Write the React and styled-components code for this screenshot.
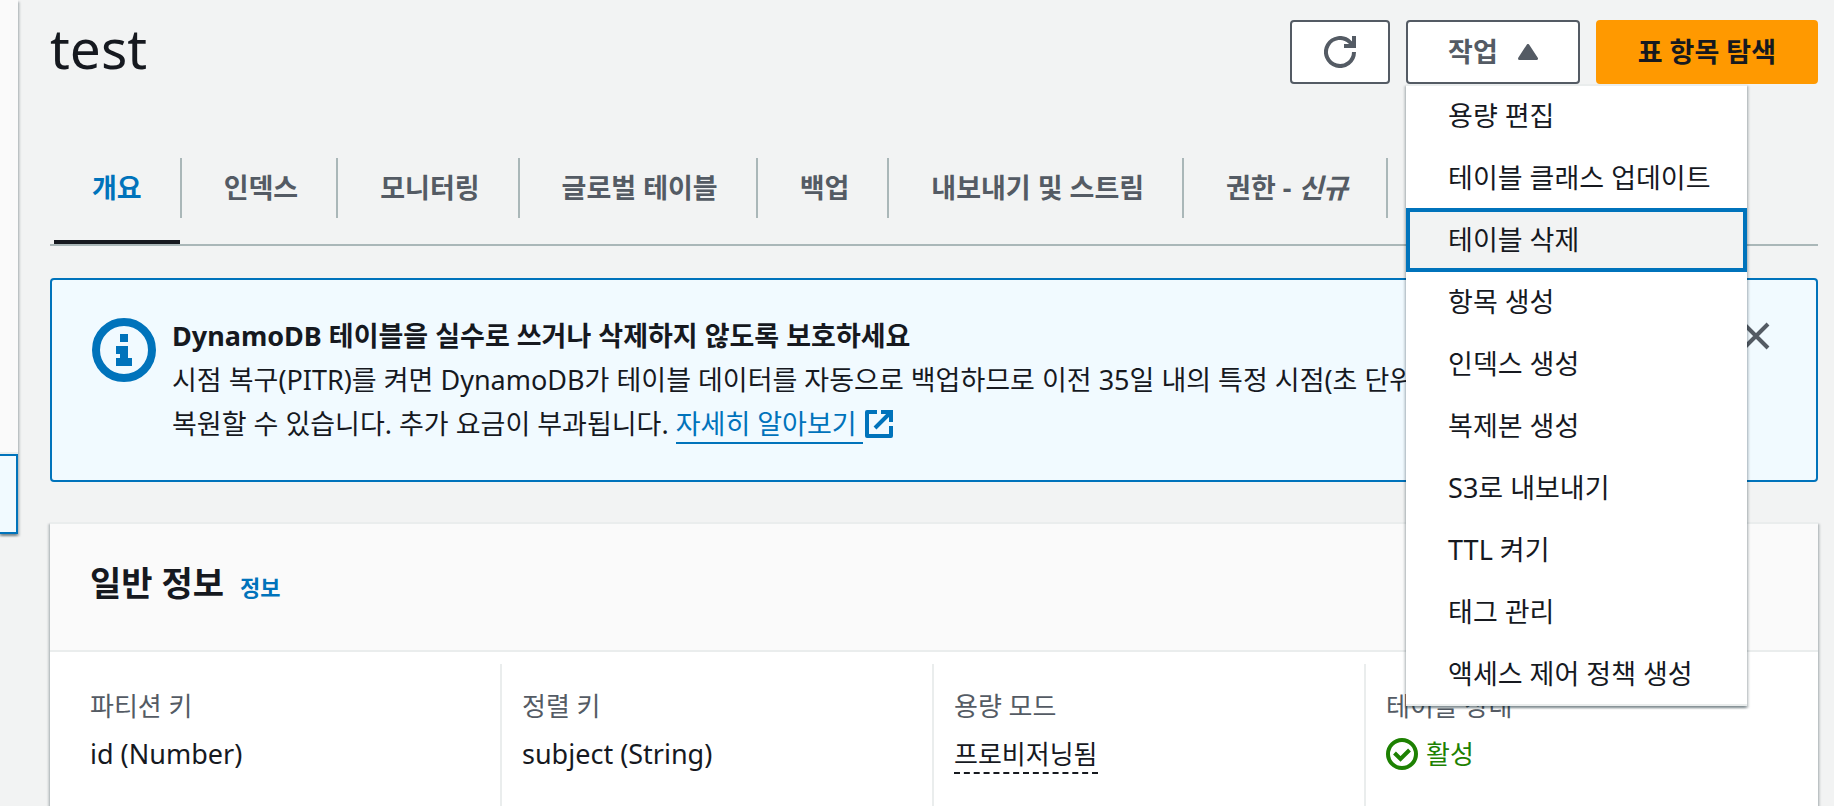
import React from "react";
import styled, { createGlobalStyle, css } from "styled-components";

const GlobalStyle = createGlobalStyle`
  *, *::before, *::after {
    box-sizing: border-box;
  }
  body {
    margin: 0;
    background: #f2f3f3;
    color: #16191f;
    font-family: "Noto Sans", "Noto Sans CJK KR", sans-serif;
    font-size: 27px;
    line-height: 44px;
    word-break: keep-all;
  }
  button {
    font: inherit;
    color: inherit;
    cursor: pointer;
  }
  a {
    color: #0073bb;
    text-decoration: none;
  }
`;

const panelShadow = css`
  box-shadow: 0 2px 2px 0 rgba(0, 28, 36, 0.3),
    2px 2px 2px 0 rgba(0, 28, 36, 0.15), -2px 2px 2px 0 rgba(0, 28, 36, 0.15);
`;

const Page = styled.div`
  display: flex;
  min-height: 100vh;
  overflow: hidden;
`;

const SidePanel = styled.aside`
  display: flex;
  flex-direction: column;
  align-self: flex-start;
  flex: none;
  width: 18px;
  background: #fafafa;
  ${panelShadow}
`;

const SideSpace = styled.div`
  height: 454px;
  border-bottom: 2px solid #eaeded;
`;

const SideItem = styled.div`
  height: 80px;
  border: 2px solid #0073bb;
  border-left: 0;
  background: #f1faff;
`;

const Main = styled.main`
  display: flex;
  flex-direction: column;
  flex: 1;
  min-width: 0;
  padding: 20px 16px 0 32px;
`;

const Header = styled.header`
  display: flex;
  align-items: flex-start;
  justify-content: space-between;
  min-height: 126px;
`;

const PageTitle = styled.h1`
  margin: 0;
  font-size: 55px;
  font-weight: 400;
  line-height: 56px;
`;

const Actions = styled.div`
  display: flex;
  gap: 16px;
`;

const Button = styled.button`
  display: flex;
  align-items: center;
  justify-content: center;
  gap: 20px;
  height: 64px;
  padding: 0 ${(props) => (props.$icon ? "32px" : "40px")};
  border: 2px solid ${(props) => (props.$primary ? "#ff9900" : "#545b64")};
  border-radius: 4px;
  background: ${(props) => (props.$primary ? "#ff9900" : "#ffffff")};
  color: ${(props) => (props.$primary ? "#16191f" : "#545b64")};
  font-weight: 700;
`;

const MenuAnchor = styled.div`
  position: relative;
`;

const Menu = styled.ul`
  position: absolute;
  top: 64px;
  left: 0;
  z-index: 2;
  width: 341px;
  margin: 0;
  padding: 0;
  list-style: none;
  background: #ffffff;
  border: 2px solid #eaeded;
  border-width: 2px 0;
  ${panelShadow}
`;

const MenuRow = styled.li`
  margin-top: -2px;
  &:last-child {
    margin-bottom: -2px;
  }
`;

const MenuItem = styled.button`
  display: block;
  width: 100%;
  height: 64px;
  padding: 0 38px;
  border: 4px solid ${(props) => (props.$active ? "#0073bb" : "transparent")};
  background: ${(props) => (props.$active ? "#f2f3f3" : "transparent")};
  text-align: left;
  white-space: nowrap;
`;

const Tabs = styled.nav`
  display: flex;
  border-bottom: 2px solid #aab7b8;
`;

const TabCell = styled.div`
  display: flex;
  align-items: flex-start;
  padding-left: 4px;
`;

const Tab = styled.button`
  height: 98px;
  padding: 12px 38px 22px;
  border: 0;
  border-bottom: 4px solid
    ${(props) => (props.$active ? "#16191f" : "transparent")};
  background: none;
  color: ${(props) => (props.$active ? "#0073bb" : "#545b64")};
  font-weight: 700;
  white-space: nowrap;
`;

const TabDivider = styled.span`
  width: 2px;
  height: 60px;
  margin-top: 12px;
  background: #aab7b8;
`;

const Alert = styled.section`
  display: flex;
  align-items: flex-start;
  margin-top: 32px;
  padding: 34px 40px;
  border: 2px solid #0073bb;
  border-radius: 4px;
  background: #f1faff;
`;

const AlertIcon = styled.span`
  display: flex;
  flex: none;
  margin: 4px 16px 0 0;
`;

const AlertBody = styled.div`
  flex: 1;
  padding-right: 240px;
`;

const AlertTitle = styled.h2`
  margin: 0;
  font-size: 27px;
  font-weight: 700;
  line-height: 44px;
`;

const AlertText = styled.p`
  margin: 0;
`;

const LearnMore = styled.a`
  display: inline-flex;
  align-items: center;
  gap: 2px;
  height: 44px;
  vertical-align: top;
`;

const LearnMoreText = styled.span`
  height: 40px;
  padding-right: 6px;
  border-bottom: 2px solid #0073bb;
  line-height: 40px;
`;

const CloseButton = styled.button`
  display: flex;
  padding: 8px 6px;
  border: 0;
  background: none;
`;

const Card = styled.section`
  display: flex;
  flex-direction: column;
  flex: 1;
  margin-top: 40px;
  border-top: 2px solid #eaeded;
  background: #ffffff;
  ${panelShadow}
`;

const CardHeader = styled.div`
  display: flex;
  align-items: baseline;
  gap: 16px;
  padding: 34px 40px 42px;
  border-bottom: 2px solid #eaeded;
  background: #fafafa;
`;

const CardTitle = styled.h2`
  margin: 0;
  font-size: 34px;
  font-weight: 700;
  line-height: 50px;
`;

const InfoLink = styled.a`
  font-size: 22px;
  font-weight: 700;
  line-height: 32px;
`;

const Details = styled.dl`
  display: grid;
  grid-template-columns: repeat(4, 1fr);
  flex: 1;
  margin: 0;
  padding: 12px 20px 0;
`;

const Detail = styled.div`
  min-height: 142px;
  padding: 20px 20px 0;
  border-right: 2px solid #eaeded;
  &:last-child {
    border-right: 0;
  }
`;

const Term = styled.dt`
  color: #545b64;
  font-size: 26px;
`;

const Value = styled.dd`
  margin: 4px 0 0;
`;

const Hint = styled.span`
  display: inline-block;
  font-size: 26px;
  line-height: 36px;
  border-bottom: 2px dashed #16191f;
`;

const Status = styled.span`
  display: flex;
  align-items: center;
  gap: 8px;
  color: #1d8102;
  font-size: 26px;
`;

const RefreshIcon = () => (
  <svg width="32" height="32" viewBox="0 0 32 32" fill="none" stroke="#545b64" strokeWidth="4" aria-hidden="true">
    <path d="M30 16a14 14 0 1 1-4.1-9.9L29 9" />
    <path d="M30 0v10H20" />
  </svg>
);

const CaretUp = () => (
  <svg width="20" height="16" viewBox="0 0 20 16" aria-hidden="true">
    <path d="M10 1.5L18.5 14.5H1.5z" fill="#545b64" stroke="#545b64" strokeWidth="3" strokeLinejoin="round" />
  </svg>
);

const InfoIcon = () => (
  <svg width="64" height="64" viewBox="0 0 64 64" aria-hidden="true">
    <circle cx="32" cy="32" r="28" fill="none" stroke="#0073bb" strokeWidth="8" />
    <path d="M28 16h8v8h-8zM24 28h12v12h4v8H24v-8h4v-4h-4z" fill="#0073bb" />
  </svg>
);

const ExternalIcon = () => (
  <svg width="28" height="28" viewBox="0 0 28 28" fill="none" stroke="#0073bb" strokeWidth="4" aria-hidden="true">
    <path d="M12 2H2v24h24V16" strokeLinejoin="round" />
    <path d="M16 2h10v10M26 2L10 18" />
  </svg>
);

const CloseIcon = () => (
  <svg width="28" height="28" viewBox="0 0 28 28" aria-hidden="true">
    <path d="M2 2l24 24M26 2L2 26" stroke="#545b64" strokeWidth="4" />
  </svg>
);

const CheckIcon = () => (
  <svg width="32" height="32" viewBox="0 0 32 32" fill="none" stroke="#1d8102" strokeWidth="4" aria-hidden="true">
    <circle cx="16" cy="16" r="14" />
    <path d="M8.5 15l6 6 9-9" />
  </svg>
);

const menuItems = [
  "용량 편집",
  "테이블 클래스 업데이트",
  "테이블 삭제",
  "항목 생성",
  "인덱스 생성",
  "복제본 생성",
  "S3로 내보내기",
  "TTL 켜기",
  "태그 관리",
  "액세스 제어 정책 생성",
];

const tabs = [
  { name: "개요" },
  { name: "인덱스" },
  { name: "모니터링" },
  { name: "글로벌 테이블" },
  { name: "백업" },
  { name: "내보내기 및 스트림" },
  { name: "권한", tag: "신규" },
];

const details = [
  { term: "파티션 키", value: "id (Number)" },
  { term: "정렬 키", value: "subject (String)" },
  { term: "용량 모드", value: <Hint>프로비저닝됨</Hint> },
  {
    term: "테이블 상태",
    value: (
      <Status>
        <CheckIcon />
        활성
      </Status>
    ),
  },
];

const App = () => {
  return (
    <>
      <GlobalStyle />
      <Page>
        <SidePanel>
          <SideSpace />
          <SideItem />
        </SidePanel>
        <Main>
          <Header>
            <PageTitle>test</PageTitle>
            <Actions>
              <Button $icon aria-label="새로 고침">
                <RefreshIcon />
              </Button>
              <MenuAnchor>
                <Button aria-expanded="true">
                  작업
                  <CaretUp />
                </Button>
                <Menu>
                  {menuItems.map((item) => (
                    <MenuRow key={item}>
                      <MenuItem $active={item === "테이블 삭제"}>{item}</MenuItem>
                    </MenuRow>
                  ))}
                </Menu>
              </MenuAnchor>
              <Button $primary>표 항목 탐색</Button>
            </Actions>
          </Header>

          <Tabs>
            {tabs.map((tab, index) => (
              <TabCell key={tab.name}>
                <Tab $active={index === 0}>
                  {tab.name}
                  {tab.tag && (
                    <>
                      {" - "}
                      <em>{tab.tag}</em>
                    </>
                  )}
                </Tab>
                <TabDivider />
              </TabCell>
            ))}
          </Tabs>

          <Alert>
            <AlertIcon>
              <InfoIcon />
            </AlertIcon>
            <AlertBody>
              <AlertTitle>
                DynamoDB 테이블을 실수로 쓰거나 삭제하지 않도록 보호하세요
              </AlertTitle>
              <AlertText>
                시점 복구(PITR)를 켜면 DynamoDB가 테이블 데이터를 자동으로
                백업하므로 이전 35일 내의 특정 시점(초 단위)으로 복원할 수
                있습니다. 추가 요금이 부과됩니다.{" "}
                <LearnMore href="#learn-more">
                  <LearnMoreText>자세히 알아보기</LearnMoreText>
                  <ExternalIcon />
                </LearnMore>
              </AlertText>
            </AlertBody>
            <CloseButton aria-label="닫기">
              <CloseIcon />
            </CloseButton>
          </Alert>

          <Card>
            <CardHeader>
              <CardTitle>일반 정보</CardTitle>
              <InfoLink href="#info">정보</InfoLink>
            </CardHeader>
            <Details>
              {details.map((detail) => (
                <Detail key={detail.term}>
                  <Term>{detail.term}</Term>
                  <Value>{detail.value}</Value>
                </Detail>
              ))}
            </Details>
          </Card>
        </Main>
      </Page>
    </>
  );
};

export default App;
